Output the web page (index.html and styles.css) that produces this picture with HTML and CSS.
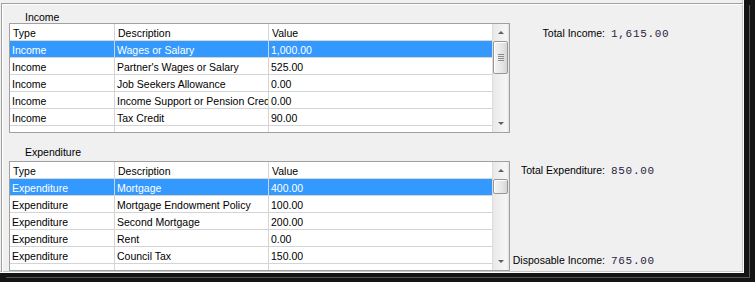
FILE: index.html
```html
<!DOCTYPE html>
<html lang="en">
<head>
  <meta charset="UTF-8">
  <meta name="viewport" content="width=device-width, initial-scale=1.0">
  <title>Budget</title>
  <link rel="stylesheet" href="styles.css">
</head>
<body>

  <div class="window">
    <div class="client">
      <div class="panel">

        <section class="group">
          <div class="group-main">
            <div class="group-title">Income</div>
            <div class="list">
              <div class="list-body">
                <div class="row head">
                  <div class="cell c-type">Type</div>
                  <div class="cell c-desc">Description</div>
                  <div class="cell c-value">Value</div>
                </div>
                <div class="row selected">
                  <div class="cell c-type">Income</div>
                  <div class="cell c-desc">Wages or Salary</div>
                  <div class="cell c-value">1,000.00</div>
                </div>
                <div class="row">
                  <div class="cell c-type">Income</div>
                  <div class="cell c-desc">Partner's Wages or Salary</div>
                  <div class="cell c-value">525.00</div>
                </div>
                <div class="row">
                  <div class="cell c-type">Income</div>
                  <div class="cell c-desc">Job Seekers Allowance</div>
                  <div class="cell c-value">0.00</div>
                </div>
                <div class="row">
                  <div class="cell c-type">Income</div>
                  <div class="cell c-desc">Income Support or Pension Credit</div>
                  <div class="cell c-value">0.00</div>
                </div>
                <div class="row">
                  <div class="cell c-type">Income</div>
                  <div class="cell c-desc">Tax Credit</div>
                  <div class="cell c-value">90.00</div>
                </div>
                <div class="row">
                  <div class="cell c-type"></div>
                  <div class="cell c-desc"></div>
                  <div class="cell c-value"></div>
                </div>
              </div>
              <div class="scrollbar">
                <div class="sb-btn"><span class="arrow up"></span></div>
                <div class="sb-track">
                  <div class="sb-thumb" style="height: 33px;"><span class="grip"></span></div>
                </div>
                <div class="sb-btn"><span class="arrow down"></span></div>
              </div>
            </div>
          </div>
          <div class="summary">
            <div class="sum-row">
              <span class="sum-label">Total Income:</span>
              <span class="sum-value">1,615.00</span>
            </div>
          </div>
        </section>

        <section class="group">
          <div class="group-main">
            <div class="group-title">Expenditure</div>
            <div class="list">
              <div class="list-body">
                <div class="row head">
                  <div class="cell c-type">Type</div>
                  <div class="cell c-desc">Description</div>
                  <div class="cell c-value">Value</div>
                </div>
                <div class="row selected">
                  <div class="cell c-type">Expenditure</div>
                  <div class="cell c-desc">Mortgage</div>
                  <div class="cell c-value">400.00</div>
                </div>
                <div class="row">
                  <div class="cell c-type">Expenditure</div>
                  <div class="cell c-desc">Mortgage Endowment Policy</div>
                  <div class="cell c-value">100.00</div>
                </div>
                <div class="row">
                  <div class="cell c-type">Expenditure</div>
                  <div class="cell c-desc">Second Mortgage</div>
                  <div class="cell c-value">200.00</div>
                </div>
                <div class="row">
                  <div class="cell c-type">Expenditure</div>
                  <div class="cell c-desc">Rent</div>
                  <div class="cell c-value">0.00</div>
                </div>
                <div class="row">
                  <div class="cell c-type">Expenditure</div>
                  <div class="cell c-desc">Council Tax</div>
                  <div class="cell c-value">150.00</div>
                </div>
                <div class="row">
                  <div class="cell c-type"></div>
                  <div class="cell c-desc"></div>
                  <div class="cell c-value"></div>
                </div>
              </div>
              <div class="scrollbar">
                <div class="sb-btn"><span class="arrow up"></span></div>
                <div class="sb-track">
                  <div class="sb-thumb" style="height: 15px;"></div>
                </div>
                <div class="sb-btn"><span class="arrow down"></span></div>
              </div>
            </div>
          </div>
          <div class="summary">
            <div class="sum-row">
              <span class="sum-label">Total Expenditure:</span>
              <span class="sum-value">850.00</span>
            </div>
            <div class="sum-row bottom">
              <span class="sum-label">Disposable Income:</span>
              <span class="sum-value">765.00</span>
            </div>
          </div>
        </section>

      </div>
    </div>
  </div>

</body>
</html>
```

FILE: styles.css
```css
body {
  margin: 0;
  background: #f0f0f0;
  font-family: 'Liberation Sans', Arial, sans-serif;
  font-size: 10.5px;
  color: #000;
}
.window {
  width: 755px;
  height: 282px;
  background: #141414;
  overflow: hidden;
}
.client {
  width: 744px;
  height: 273px;
  box-sizing: border-box;
  background: #f0f0f0;
  border-right: 1px solid #fcfcfc;
  border-bottom: 1px solid #fcfcfc;
  box-shadow: inset -1px -1px 0 #c8c8c8, 5px 4px 0 #141414, 6px 5px 0 #565656;
  overflow: hidden;
}
.panel {
  margin: 3px 0 0 1px;
  height: 300px;
  border-top: 1px solid #a0a0a0;
  border-left: 1px solid #a0a0a0;
  box-shadow: inset 1px 1px 0 #fff;
  padding: 6px 0 0 7px;
}
.group {
  display: flex;
}
.group + .group {
  margin-top: 12px;
}
.group-main {
  width: 501px;
}
.group-title {
  height: 13px;
  line-height: 14px;
  padding-left: 16px;
}
.group + .group .group-title {
  height: 16px;
}
.list {
  height: 110px;
  box-sizing: border-box;
  border: 1px solid #a0a0a0;
  background: #fff;
  display: flex;
}
.list-body {
  flex: 1;
  overflow: hidden;
}
.row {
  display: flex;
  height: 17px;
  box-sizing: border-box;
  border-bottom: 1px solid #d4d4d4;
}
.row.head {
  border-bottom-color: #d8d8d8;
}
.row.selected {
  background: #3399ff;
  color: #fff;
}
.cell {
  box-sizing: border-box;
  padding: 1px 0 0 2px;
  line-height: 16px;
  white-space: nowrap;
  overflow: hidden;
  border-right: 1px solid #d4d4d4;
}
.row.head .cell {
  padding-left: 3px;
}
.c-type {
  width: 105px;
}
.c-desc {
  width: 154px;
}
.c-value {
  flex: 1;
  border-right: none;
}

/* scrollbar */
.scrollbar {
  width: 17px;
  display: flex;
  flex-direction: column;
  background: linear-gradient(to right, #dcdcdc 0 1px, #e9e9e9 1px, #f7f7f7 15px, #e6e6e6 16px);
}
.sb-btn {
  height: 17px;
  display: flex;
  align-items: center;
  justify-content: center;
}
.arrow {
  width: 0;
  height: 0;
  border-left: 3px solid transparent;
  border-right: 3px solid transparent;
}
.arrow.up {
  border-bottom: 3px solid #606060;
}
.arrow.down {
  border-top: 3px solid #606060;
}
.sb-track {
  flex: 1;
}
.sb-thumb {
  margin: 0 1px;
  box-sizing: border-box;
  border: 1px solid #979797;
  border-radius: 2px;
  background: linear-gradient(to right, #f4f4f4, #e6e6e6 60%, #d6d6d6);
  box-shadow: inset 1px 1px 0 #fff;
  display: flex;
  align-items: center;
  justify-content: center;
}
.grip {
  width: 6px;
  height: 7px;
  background: repeating-linear-gradient(to bottom, #8a8a8a 0 1px, transparent 1px 2px);
}

/* totals */
.summary {
  flex: 1;
  display: flex;
  flex-direction: column;
  padding: 16px 0 3px;
}
.group + .group .summary {
  padding-top: 18px;
}
.sum-row {
  display: flex;
  align-items: baseline;
  line-height: 14px;
}
.sum-row.bottom {
  margin-top: auto;
}
.sum-label {
  width: 95px;
  text-align: right;
}
.sum-value {
  margin-left: 6px;
  font-family: 'Liberation Mono', 'Courier New', monospace;
  font-size: 11px;
  letter-spacing: 0.7px;
  color: #2a2244;
}
```
